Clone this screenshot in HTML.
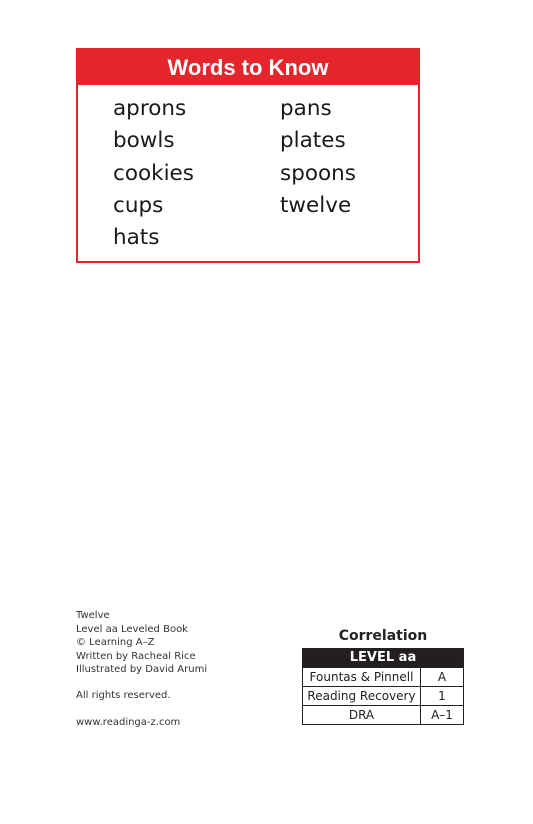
<html><head><style>
body{margin:0;width:533px;height:824px;background:#fff;position:relative;font-family:"DejaVu Sans","Liberation Sans",sans-serif;color:#222}
.box{position:absolute;left:76px;top:48px;width:340px;height:211px;border:2px solid #e3262b;}
.hd{background:#e3262b;height:35px;color:#fff;text-align:center;font:bold 22px/35px "Liberation Sans",sans-serif;}
.w{position:absolute;font-size:21.5px;line-height:32.3px;font-family:"DejaVu Sans",sans-serif;color:#1a1a1a}
.sm{position:absolute;left:76px;font-size:10px;line-height:13.6px;color:#333}
table{position:absolute;left:302px;top:648px;width:162px;border-collapse:collapse;font-size:12px}
td{border:1px solid #222;height:18px;padding:0;text-align:center;line-height:18px}
</style></head><body>
<div class="box"><div class="hd">Words to Know</div>
<div class="w" style="left:35px;top:43px">aprons<br>bowls<br>cookies<br>cups<br>hats</div>
<div class="w" style="left:202px;top:43px">pans<br>plates<br>spoons<br>twelve</div>
</div>
<div class="sm" style="top:609px">Twelve<br>Level aa Leveled Book<br>© Learning A–Z<br>Written by Racheal Rice<br>Illustrated by David Arumi</div>
<div class="sm" style="top:689px">All rights reserved.</div>
<div class="sm" style="top:716px">www.readinga-z.com</div>
<div style="position:absolute;left:302px;width:162px;top:628px;text-align:center;font-weight:bold;font-size:14px">Correlation</div>
<table><tr><td colspan="2" style="background:#231f20;color:#fff;font-weight:bold;font-size:13px">LEVEL aa</td></tr>
<tr><td style="width:117px">Fountas &amp; Pinnell</td><td>A</td></tr>
<tr><td>Reading Recovery</td><td>1</td></tr>
<tr><td>DRA</td><td>A–1</td></tr></table>
</body></html>
